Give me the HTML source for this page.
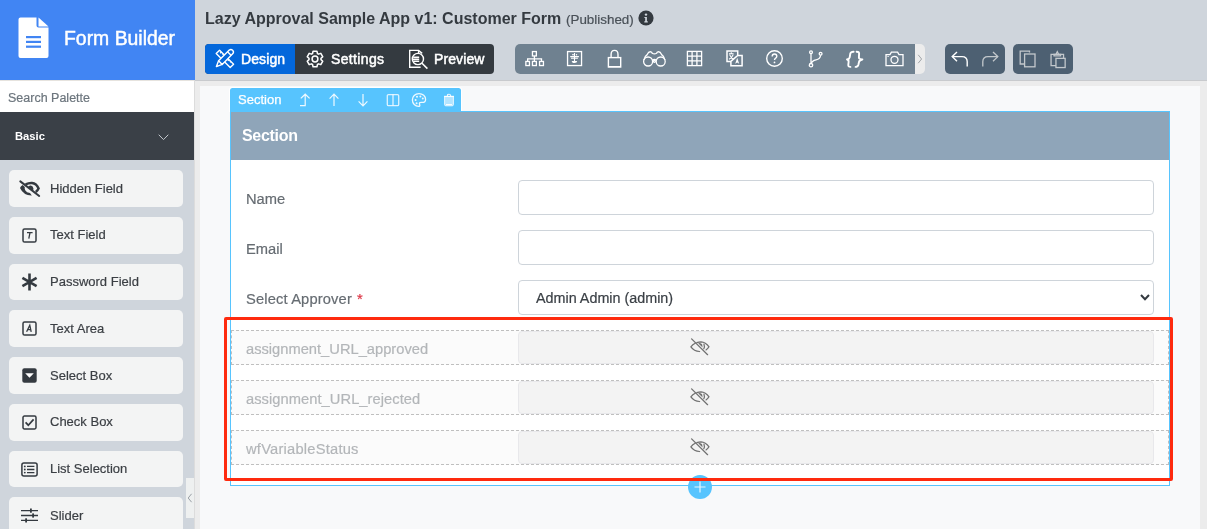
<!DOCTYPE html>
<html><head><meta charset="utf-8">
<style>
*{box-sizing:border-box;margin:0;padding:0}
html,body{width:1207px;height:529px;overflow:hidden;font-family:"Liberation Sans",sans-serif;background:#ececec;position:relative}
.abs{position:absolute}
.tx{position:absolute;line-height:1;white-space:nowrap;will-change:transform}
.nb{-webkit-text-stroke:0.2px currentColor}
svg{position:absolute;overflow:visible}
.pi{position:absolute;left:9px;width:174px;height:36.75px;background:#f3f4f4;border-radius:5px}
</style></head><body>
<div class="abs" style="left:0;top:112px;width:195px;height:417px;background:#cfd5dc"></div>
<div class="abs" style="left:0;top:0;width:195px;height:80px;background:#4185f3"></div>
<div class="abs" style="left:195px;top:0;width:1012px;height:80px;background:#cfd5dc"></div>
<div class="abs" style="left:0;top:80px;width:195px;height:1px;background:#e6e3de"></div>
<div class="abs" style="left:195px;top:80px;width:1012px;height:1px;background:#c8cacd"></div>
<div class="abs" style="left:0;top:81px;width:194px;height:31px;background:#fff"></div>
<div class="abs" style="left:194px;top:80px;width:1px;height:449px;background:#dcdcdc"></div>
<div class="abs" style="left:200px;top:86px;width:1000px;height:443px;background:#f8f9fa"></div>
<svg style="left:18px;top:17px" width="32" height="42" viewBox="0 0 32 42">
<path d="M2.5 0.5 H18.5 V8.5 Q18.5 10.5 20.5 10.5 H30.5 V39 Q30.5 41 28.5 41 H2.5 Q0.5 41 0.5 39 V2.5 Q0.5 0.5 2.5 0.5Z" fill="#fff"/>
<path d="M20.5 0.5 L30.5 9.5 H20.5Z" fill="#fff"/>
<rect x="8" y="19" width="15" height="2.2" fill="#4185f3"/><rect x="8" y="23.8" width="15" height="2.2" fill="#4185f3"/><rect x="8" y="28.6" width="15" height="2.2" fill="#4185f3"/></svg>
<div class="tx" style="left:64px;top:28.98px;font-size:19.4px;color:#fff;-webkit-text-stroke:0.45px #fff">Form Builder</div>
<div class="tx nb" style="left:8px;top:92.32px;font-size:12.5px;color:#6c757d">Search Palette</div>
<div class="abs" style="left:0;top:112px;width:194px;height:48px;background:#3a4047"></div>
<div class="tx" style="left:15px;top:130.52px;font-size:11.2px;color:#fff;font-weight:bold">Basic</div>
<svg style="left:158px;top:134px" width="11" height="7" viewBox="0 0 11 7"><path d="M0.7 0.7 L5.5 5.6 L10.3 0.7" fill="none" stroke="#c4c9ce" stroke-width="1"/></svg>
<div class="pi" style="top:170.00px"><svg style="left:7px;top:6px" width="28" height="24" viewBox="0 0 28 24"><path d="M6.6 9 Q4.4 10.4 4 12 Q7.6 19.6 15.8 19.4 L14 16.9 Q10.6 16.8 9.2 14.2 Q8.4 12.6 8.8 11 Z" fill="#343a40"/><path d="M9.6 8.4 Q12.8 6.8 16 7 Q20.4 7.4 22.6 12.4 Q21.8 14.4 19.8 16" fill="none" stroke="#343a40" stroke-width="2.5"/><path d="M12 11.3 Q12.6 9.2 14.8 9.4 Q17.2 9.8 17.4 12.6 L17.2 15 Z" fill="#343a40"/><path d="M4.3 5.4 L23.2 20" stroke="#343a40" stroke-width="2" stroke-linecap="round"/></svg><div class="tx nb" style="left:41px;top:11.90px;font-size:13px;color:#3b3f44">Hidden Field</div></div>
<div class="pi" style="top:216.75px"><svg style="left:13px;top:11px" width="15" height="15" viewBox="0 0 15 15"><rect x="1" y="1" width="13" height="13" rx="1.6" fill="none" stroke="#343a40" stroke-width="1.5"/><path d="M5 4.6 H10.6 M8 4.6 L6.8 10.6" stroke="#343a40" stroke-width="1.3" fill="none"/></svg><div class="tx nb" style="left:41px;top:11.10px;font-size:13px;color:#3b3f44">Text Field</div></div>
<div class="pi" style="top:263.50px"><svg style="left:12px;top:9px" width="17" height="18" viewBox="0 0 17 18"><path d="M8.5 0.6 V17.4 M1.4 4.8 L15.6 13.2 M1.4 13.2 L15.6 4.8" stroke="#343a40" stroke-width="2.6" fill="none"/></svg><div class="tx nb" style="left:41px;top:11.90px;font-size:13px;color:#3b3f44">Password Field</div></div>
<div class="pi" style="top:310.25px"><svg style="left:13px;top:11px" width="15" height="15" viewBox="0 0 15 15"><rect x="1" y="1" width="13" height="13" rx="1.6" fill="none" stroke="#343a40" stroke-width="1.5"/><path d="M4.6 10.8 L7.8 4.2 L9.2 10.8 M5.8 8.6 H9" stroke="#343a40" stroke-width="1.3" fill="none"/></svg><div class="tx nb" style="left:41px;top:11.90px;font-size:13px;color:#3b3f44">Text Area</div></div>
<div class="pi" style="top:357.00px"><svg style="left:13px;top:11px" width="15" height="15" viewBox="0 0 15 15"><rect x="0.3" y="0.3" width="14.4" height="14.4" rx="2" fill="#343a40"/><path d="M3.2 5.2 H11.8 L7.5 9.8Z" fill="#fff"/></svg><div class="tx nb" style="left:41px;top:11.90px;font-size:13px;color:#3b3f44">Select Box</div></div>
<div class="pi" style="top:403.75px"><svg style="left:13px;top:11px" width="15" height="15" viewBox="0 0 15 15"><rect x="1" y="1" width="13" height="13" rx="1.4" fill="none" stroke="#343a40" stroke-width="1.5"/><path d="M3.6 7.4 L6.3 10.2 L11.6 4.4" stroke="#343a40" stroke-width="1.7" fill="none"/></svg><div class="tx nb" style="left:41px;top:11.10px;font-size:13px;color:#3b3f44">Check Box</div></div>
<div class="pi" style="top:450.50px"><svg style="left:12px;top:11px" width="17" height="15" viewBox="0 0 17 15"><rect x="0.9" y="0.9" width="15.2" height="13.2" rx="2" fill="none" stroke="#343a40" stroke-width="1.5"/><path d="M6 4.4 H13.4 M6 7.5 H13.4 M6 10.6 H13.4" stroke="#343a40" stroke-width="1.3"/><circle cx="3.8" cy="4.4" r="0.9" fill="#343a40"/><circle cx="3.8" cy="7.5" r="0.9" fill="#343a40"/><circle cx="3.8" cy="10.6" r="0.9" fill="#343a40"/></svg><div class="tx nb" style="left:41px;top:11.90px;font-size:13px;color:#3b3f44">List Selection</div></div>
<div class="pi" style="top:497.25px"><svg style="left:12px;top:11px" width="17" height="15" viewBox="0 0 17 15"><path d="M0 2.6 H17 M0 7.5 H17 M0 12.4 H17" stroke="#343a40" stroke-width="1.4"/><rect x="9" y="0.5" width="1.8" height="4.2" fill="#343a40"/><rect x="11.2" y="5.4" width="1.8" height="4.2" fill="#343a40"/><rect x="4.2" y="10.3" width="1.8" height="4.2" fill="#343a40"/></svg><div class="tx nb" style="left:41px;top:11.90px;font-size:13px;color:#3b3f44">Slider</div></div>
<div class="abs" style="left:186px;top:478px;width:8px;height:40px;background:#eef0f0"></div>
<svg style="left:187px;top:493px" width="6" height="10" viewBox="0 0 6 10"><path d="M4.6 0.8 L1.2 5 L4.6 9.2" fill="none" stroke="#9aa0a6" stroke-width="1"/></svg>
<div class="tx" style="left:205px;top:10.56px;font-size:16px;color:#343a40;font-weight:bold">Lazy Approval Sample App v1: Customer Form</div>
<div class="tx nb" style="left:566px;top:12.66px;font-size:13.4px;color:#495057">(Published)</div>
<svg style="left:637.5px;top:9.8px" width="16" height="16" viewBox="0 0 16 16"><circle cx="8" cy="8" r="7.6" fill="#343a40"/><circle cx="8" cy="4.6" r="1.2" fill="#cfd5dc"/><path d="M6.4 6.9 H8.9 V11.2 H9.8 V12.4 H6.3 V11.2 H7.2 V8.1 H6.4Z" fill="#cfd5dc"/></svg>
<div class="abs" style="left:205px;top:44px;width:289px;height:30px;background:#343a40;border-radius:4px"></div>
<div class="abs" style="left:205px;top:44px;width:90px;height:30px;background:#0367db;border-radius:4px 0 0 4px"></div>
<svg style="left:214px;top:48px" width="22" height="22" viewBox="0 0 22 22"><g stroke="#fff" stroke-width="1.4" stroke-linejoin="round" fill="none"><path d="M2.2 5.6 L5.6 2.2 L19.6 16.2 L16.2 19.6 Z"/><path d="M7.4 4 L6.2 5.2 M9.2 5.8 L8.4 6.6 M15 11.6 L13.8 12.8 M16.8 13.4 L16 14.2"/><path d="M4.6 12.8 L15.3 2.1 Q17 0.8 18.6 2.3 Q20.2 3.9 18.9 5.6 L8.2 16.4 Z" fill="#0367db"/><path d="M4.6 12.8 L2.4 18.6 L8.2 16.4 M13.6 3.8 L17.2 7.4"/></g><path d="M2.4 18.6 L3 16.9 L4.1 18 Z" fill="#fff"/></svg>
<div class="tx" style="left:241px;top:52.15px;font-size:14px;color:#fff;-webkit-text-stroke:0.5px #fff;letter-spacing:0.1px">Design</div>
<svg style="left:304.6px;top:48.6px" width="20" height="20" viewBox="0 0 20 20"><path d="M7.56 4.52 L8.04 2.14 L11.96 2.14 L12.44 4.52 L13.53 5.15 L15.83 4.37 L17.79 7.77 L15.97 9.37 L15.97 10.63 L17.79 12.23 L15.83 15.63 L13.53 14.85 L12.44 15.48 L11.96 17.86 L8.04 17.86 L7.56 15.48 L6.47 14.85 L4.17 15.63 L2.21 12.23 L4.03 10.63 L4.03 9.37 L2.21 7.77 L4.17 4.37 L6.47 5.15Z" fill="none" stroke="#fff" stroke-width="1.5" stroke-linejoin="round"/><circle cx="10" cy="10" r="2.9" fill="none" stroke="#fff" stroke-width="1.5"/></svg>
<div class="tx" style="left:331px;top:52.15px;font-size:14px;color:#fff;-webkit-text-stroke:0.5px #fff;letter-spacing:0.35px">Settings</div>
<svg style="left:406px;top:47px" width="24" height="24" viewBox="0 0 24 24"><g fill="none" stroke="#fff" stroke-width="1.4"><path d="M14.6 20.2 H3.7 V3.4 H12.6 L16.2 6.4"/><circle cx="11.9" cy="12" r="5.6"/><path d="M7.2 10.3 H13.2 M6.6 12.3 H13.2 M7.2 14.3 H13.2 M12.6 3.6 V6.6"/><path d="M16 16.2 L21.4 21.6" stroke-width="1.5"/></g></svg>
<div class="tx" style="left:434px;top:52.15px;font-size:14px;color:#fff;-webkit-text-stroke:0.5px #fff;letter-spacing:0.1px">Preview</div>
<div class="abs" style="left:515px;top:44px;width:410px;height:30px;background:#ececec;border-radius:5px"></div>
<div class="abs" style="left:515px;top:44px;width:400px;height:30px;background:#6f8190;border-radius:5px 0 0 5px"></div>
<svg style="left:917px;top:54px" width="6" height="10" viewBox="0 0 6 10"><path d="M1.2 0.8 L4.6 5 L1.2 9.2" fill="none" stroke="#a0a4a8" stroke-width="1"/></svg>
<svg style="left:524px;top:50px" width="21" height="17" viewBox="0 0 21 17"><g fill="none" stroke="#fff" stroke-width="1.3"><rect x="8.45" y="1.55" width="3.9" height="4.4"/><rect x="1.85" y="11.45" width="3.6" height="4.1"/><rect x="8.45" y="11.45" width="3.9" height="4.1"/><rect x="15.55" y="11.45" width="3.9" height="4.1"/><path d="M10.4 6 V11.4 M3.65 11.4 V8.8 H17.5 V11.4"/></g></svg>
<svg style="left:566px;top:50px" width="17" height="17" viewBox="0 0 17 17"><rect x="1.55" y="1.55" width="14" height="14" fill="none" stroke="#fff" stroke-width="1.3"/><g stroke="#fff" stroke-width="1.1" fill="none"><path d="M8.5 2.9 V12.6 M6 4.8 H8.5 M4.2 6.6 H12.9 M5 8.3 H11.9"/></g><circle cx="10.5" cy="4.7" r="0.75" fill="#fff"/><path d="M5.8 11 H11.2 Q11.2 13.1 8.5 13.1 Q5.8 13.1 5.8 11Z" fill="#fff"/></svg>
<svg style="left:606px;top:49px" width="17" height="20" viewBox="0 0 17 20"><g fill="none" stroke="#fff" stroke-width="1.4"><rect x="2.4" y="8.6" width="12.3" height="9.4"/><path d="M5.1 8.6 V5.4 Q5.1 1.4 8.55 1.4 Q12 1.4 12 5.4 V8.6"/><path d="M2.4 17.6 H14.7" stroke-width="1.2"/></g></svg>
<svg style="left:642px;top:50px" width="25" height="18" viewBox="0 0 25 18"><g fill="none" stroke="#fff" stroke-width="1.3"><circle cx="6.1" cy="11.5" r="4.5"/><circle cx="18.7" cy="11.5" r="4.5"/><circle cx="12.4" cy="11.3" r="1"/><path d="M1.9 10 Q2.3 6.4 5.2 4.6 Q6.6 1.4 8.8 1.8 Q9.8 2 10.2 3.2 Q12.4 4.4 14.6 3.2 Q15 2 16 1.8 Q18.2 1.4 19.6 4.6 Q22.5 6.4 22.9 10"/><path d="M10.6 10.2 Q12.4 8.8 14.2 10.2"/></g></svg>
<svg style="left:686px;top:50px" width="17" height="17" viewBox="0 0 17 17"><g fill="none" stroke="#fff" stroke-width="1.3"><rect x="1.4" y="1.4" width="14.2" height="14.2"/><path d="M6.1 1.4 V15.6 M10.9 1.4 V15.6 M1.4 6.1 H15.6 M1.4 10.9 H15.6"/></g></svg>
<svg style="left:725px;top:49px" width="19" height="19" viewBox="0 0 19 19"><path d="M12.7 6.4 V2 H2 V12.4 H5.9 V16.8 H17.1 V6.4 H12.7 L5.9 12.4" fill="none" stroke="#fff" stroke-width="1.5"/><g fill="none" stroke="#fff" stroke-width="1.1"><path d="M4 4.8 H8.6 M6.3 3.2 V4.8 M4.6 5.6 Q6 9.2 8.6 10.2 M8.2 5.6 Q7 9 4 10.2"/></g><path d="M10.2 14.8 L12.2 8.8 L14.2 14.8 L12.2 13.6Z" fill="#fff"/></svg>
<svg style="left:765px;top:49px" width="19" height="19" viewBox="0 0 19 19"><circle cx="9.5" cy="9.5" r="7.8" fill="none" stroke="#fff" stroke-width="1.4"/><path d="M7.2 7.4 Q7.2 5 9.5 5 Q11.8 5 11.8 7.2 Q11.8 8.6 10.4 9.3 Q9.5 9.8 9.5 11" fill="none" stroke="#fff" stroke-width="1.4"/><circle cx="9.5" cy="13.4" r="0.9" fill="#fff"/></svg>
<svg style="left:808px;top:49.6px" width="16" height="18" viewBox="0 0 16 18"><g fill="none" stroke="#fff" stroke-width="1.3"><circle cx="3" cy="2.2" r="1.4"/><circle cx="3" cy="15.2" r="1.7"/><circle cx="12.6" cy="3.8" r="1.4"/><path d="M3 3.6 V13.5 M12.6 5.2 Q12.2 9 8 9.8 Q4 10.6 3.4 13.4"/></g></svg>
<svg style="left:845px;top:50px" width="19" height="19" viewBox="0 0 19 19"><g fill="none" stroke="#fff" stroke-width="1.9" stroke-linecap="round" stroke-linejoin="round"><path d="M8.6 1.7 Q5.9 1.6 5.3 3.6 L4.7 7.4 Q4.4 9.2 2 9.5 Q3.9 10 3.6 12 L3.3 14.8 Q3.1 16.9 5.4 16.9"/><path d="M11.6 1.7 Q14.1 1.6 14.1 3.6 L13.9 7.4 Q13.9 9.2 17.4 9.5 Q14.4 10 14 12 L13.4 14.8 Q12.9 16.9 10.6 16.9"/></g></svg>
<svg style="left:885px;top:51px" width="19" height="16" viewBox="0 0 19 16"><g fill="none" stroke="#fff" stroke-width="1.3"><path d="M1 3.6 H5 L6.4 1.2 H12.6 L14 3.6 H18 V14.6 H1 Z"/><circle cx="9.5" cy="8.8" r="3.5"/></g><rect x="2.5" y="5" width="1.2" height="1" fill="#fff"/></svg>
<div class="abs" style="left:945px;top:44px;width:60px;height:30px;background:#4d6072;border-radius:5px"></div>
<svg style="left:951px;top:51px" width="18" height="16" viewBox="0 0 18 16"><g fill="none" stroke="#fff" stroke-width="1.4"><path d="M6 1 L1.2 5.6 L6 10.2"/><path d="M1.2 5.6 H11 Q16.2 5.6 16.2 10.8 V15.6"/></g></svg>
<svg style="left:981px;top:51px" width="18" height="16" viewBox="0 0 18 16"><g fill="none" stroke="#c3c8cc" stroke-width="1.3"><path d="M12 1 L16.8 5.6 L12 10.2"/><path d="M16.8 5.6 H7 Q1.8 5.6 1.8 10.8 V15.6"/></g></svg>
<div class="abs" style="left:1013px;top:44px;width:60px;height:30px;background:#4d6072;border-radius:5px"></div>
<svg style="left:1019px;top:50px" width="18" height="18" viewBox="0 0 18 18"><g fill="none" stroke="#c3c8cc" stroke-width="1.3"><path d="M10.5 2.6 V1.2 H1.2 V14 H5.6"/><rect x="5.6" y="4" width="10.4" height="12.8"/></g></svg>
<svg style="left:1049px;top:49px" width="18" height="20" viewBox="0 0 18 20"><g fill="none" stroke="#c3c8cc" stroke-width="1.3"><path d="M6.9 16.65 H2.05 V5.35 H14.55 V9.3"/><path d="M5 5.35 V6.9 H11.6 V5.35 H9.6 L8.3 2.8 L7 5.35 Z"/><rect x="6.95" y="9.35" width="9.2" height="9.2"/></g></svg>
<div class="abs" style="left:229px;top:86.6px;width:233px;height:25.4px;background:#fff;border-radius:3px 3px 0 0"></div>
<div class="abs" style="left:230px;top:87.8px;width:231px;height:24.2px;background:#57c4fe;border-radius:2.5px 2.5px 0 0"></div>
<div class="tx" style="left:238px;top:92.60px;font-size:13px;color:#fff;-webkit-text-stroke:0.25px #fff">Section</div>
<svg style="left:299px;top:93px" width="12" height="14" viewBox="0 0 12 14"><g fill="none" stroke="rgba(255,255,255,0.9)" stroke-width="1.2"><path d="M1 12.6 H6.2 V1.4 M1.8 5.4 L6.2 1.2 L10.6 5.4"/></g></svg>
<svg style="left:328px;top:93px" width="12" height="14" viewBox="0 0 12 14"><g fill="none" stroke="rgba(255,255,255,0.9)" stroke-width="1.2"><path d="M6 1.4 V13 M1.6 5.6 L6 1.2 L10.4 5.6"/></g></svg>
<svg style="left:357px;top:93px" width="12" height="14" viewBox="0 0 12 14"><g fill="none" stroke="rgba(255,255,255,0.9)" stroke-width="1.2"><path d="M6 1 V12.6 M1.6 8.4 L6 12.8 L10.4 8.4"/></g></svg>
<svg style="left:386px;top:93px" width="14" height="14" viewBox="0 0 14 14"><g fill="none" stroke="rgba(255,255,255,0.8)" stroke-width="1.3"><rect x="1.3" y="1.6" width="11.4" height="11" rx="1.2"/><path d="M7 1.6 V12.6"/></g></svg>
<svg style="left:411px;top:92px" width="16" height="16" viewBox="0 0 16 16"><path d="M8 1.6 C4 1.6 1.4 4.4 1.4 8 C1.4 11.6 4.2 14.4 7.6 14.4 C8.6 14.4 9 13.8 8.8 13 C8.6 12.2 8 11.6 8.6 10.8 C9.2 10.2 10 10.4 11.2 10.4 C13.4 10.4 14.6 9.2 14.6 7.4 C14.6 4.2 11.8 1.6 8 1.6Z" fill="none" stroke="rgba(255,255,255,0.9)" stroke-width="1.3"/><circle cx="4.6" cy="8" r="1" fill="rgba(255,255,255,0.9)"/><circle cx="6" cy="4.8" r="1" fill="rgba(255,255,255,0.9)"/><circle cx="9.4" cy="4.4" r="1" fill="rgba(255,255,255,0.9)"/><circle cx="11.8" cy="6.6" r="1" fill="rgba(255,255,255,0.9)"/><circle cx="5.6" cy="11.2" r="1" fill="rgba(255,255,255,0.9)"/></svg>
<svg style="left:443px;top:93px" width="12" height="14" viewBox="0 0 12 14"><path d="M1.6 3.6 H10.4 V11.6 Q10.4 12.8 9.2 12.8 H2.8 Q1.6 12.8 1.6 11.6 Z" fill="rgba(255,255,255,0.55)" stroke="rgba(255,255,255,0.8)" stroke-width="1"/><path d="M1 3.4 H11" stroke="rgba(255,255,255,0.85)" stroke-width="1.2"/><path d="M4.4 3.2 V2.4 Q4.4 1.2 6 1.2 Q7.6 1.2 7.6 2.4 V3.2" fill="none" stroke="rgba(255,255,255,0.85)" stroke-width="1.1"/><path d="M3 11.6 H9" stroke="#fff" stroke-width="1"/></svg>
<div class="abs" style="left:230px;top:111px;width:940px;height:375px;border:1px solid #57c4fe;background:#fff"></div>
<div class="abs" style="left:231px;top:112px;width:938px;height:48px;background:#8fa5b9"></div>
<div class="tx" style="left:242px;top:127.56px;font-size:16px;color:#fff;font-weight:bold;letter-spacing:-0.3px">Section</div>
<div class="tx nb" style="left:246px;top:192.36px;font-size:14.7px;color:#666c72">Name</div>
<div class="abs" style="left:518px;top:180px;width:636px;height:35px;border:1px solid #ced4da;border-radius:4px;background:#fff"></div>
<div class="tx nb" style="left:246px;top:242.36px;font-size:14.7px;color:#666c72">Email</div>
<div class="abs" style="left:518px;top:230px;width:636px;height:35px;border:1px solid #ced4da;border-radius:4px;background:#fff"></div>
<div class="tx nb" style="left:246px;top:292.36px;font-size:14.7px;color:#666c72;letter-spacing:0.15px">Select Approver</div>
<div class="tx nb" style="left:357px;top:292.36px;font-size:14.7px;color:#dc3545">*</div>
<div class="abs" style="left:518px;top:280px;width:636px;height:35px;border:1px solid #ced4da;border-radius:4px;background:#fff"></div>
<div class="tx nb" style="left:535.5px;top:290.55px;font-size:14.35px;color:#3b4046">Admin Admin (admin)</div>
<svg style="left:1140px;top:294px" width="10" height="7" viewBox="0 0 10 7"><path d="M1 1 L5 5.2 L9 1" fill="none" stroke="#343a40" stroke-width="2"/></svg>
<div class="abs" style="left:231px;top:330px;width:938px;height:35px;border:1px dashed #bfbfbf;background:#fbfbfb"></div>
<div class="abs" style="left:518px;top:331px;width:636px;height:33px;border:1px solid #e8e8eb;border-radius:4px;background:#f3f3f3"></div>
<div class="tx nb" style="left:246px;top:342.16px;font-size:14.7px;color:#b3b6b9">assignment_URL_approved</div>
<svg style="left:690px;top:337px" width="20" height="20" viewBox="0 0 20 20"><g fill="none" stroke="#707070" stroke-width="1.25" stroke-linecap="round"><path d="M1.6 1.9 L17.6 17.7"/><path d="M6.8 5.6 Q9 4.8 11 4.8 Q15.6 5 19 9.8 Q18 11.6 16 12.9"/><path d="M5.2 6.3 Q2.6 7.6 0.9 9.8 Q4 14.2 9.6 14.5"/><path d="M14 7.2 Q14.9 9.6 13.8 11.8"/></g><path d="M8.2 6.3 Q10.8 5.4 12.2 7.6 L12.6 10.6Z" fill="#707070"/></svg>
<div class="abs" style="left:231px;top:380px;width:938px;height:35px;border:1px dashed #bfbfbf;background:#fbfbfb"></div>
<div class="abs" style="left:518px;top:381px;width:636px;height:33px;border:1px solid #e8e8eb;border-radius:4px;background:#f3f3f3"></div>
<div class="tx nb" style="left:246px;top:392.16px;font-size:14.7px;color:#b3b6b9;letter-spacing:0.05px">assignment_URL_rejected</div>
<svg style="left:690px;top:387px" width="20" height="20" viewBox="0 0 20 20"><g fill="none" stroke="#707070" stroke-width="1.25" stroke-linecap="round"><path d="M1.6 1.9 L17.6 17.7"/><path d="M6.8 5.6 Q9 4.8 11 4.8 Q15.6 5 19 9.8 Q18 11.6 16 12.9"/><path d="M5.2 6.3 Q2.6 7.6 0.9 9.8 Q4 14.2 9.6 14.5"/><path d="M14 7.2 Q14.9 9.6 13.8 11.8"/></g><path d="M8.2 6.3 Q10.8 5.4 12.2 7.6 L12.6 10.6Z" fill="#707070"/></svg>
<div class="abs" style="left:231px;top:430px;width:938px;height:35px;border:1px dashed #bfbfbf;background:#fbfbfb"></div>
<div class="abs" style="left:518px;top:431px;width:636px;height:33px;border:1px solid #e8e8eb;border-radius:4px;background:#f3f3f3"></div>
<div class="tx nb" style="left:246px;top:442.16px;font-size:14.7px;color:#b3b6b9;letter-spacing:0.22px">wfVariableStatus</div>
<svg style="left:690px;top:437px" width="20" height="20" viewBox="0 0 20 20"><g fill="none" stroke="#707070" stroke-width="1.25" stroke-linecap="round"><path d="M1.6 1.9 L17.6 17.7"/><path d="M6.8 5.6 Q9 4.8 11 4.8 Q15.6 5 19 9.8 Q18 11.6 16 12.9"/><path d="M5.2 6.3 Q2.6 7.6 0.9 9.8 Q4 14.2 9.6 14.5"/><path d="M14 7.2 Q14.9 9.6 13.8 11.8"/></g><path d="M8.2 6.3 Q10.8 5.4 12.2 7.6 L12.6 10.6Z" fill="#707070"/></svg>
<div class="abs" style="left:688px;top:475px;width:24px;height:24px;border-radius:50%;background:#57c4fe"></div>
<svg style="left:694px;top:481px" width="12" height="12" viewBox="0 0 12 12"><path d="M6 0.5 V11.5 M0.5 6 H11.5" stroke="#fff" stroke-width="1.2" opacity="0.85"/></svg>
<div class="abs" style="left:224px;top:317px;width:949px;height:164px;border:3px solid #fe2a0e;border-radius:2px"></div>
</body></html>
